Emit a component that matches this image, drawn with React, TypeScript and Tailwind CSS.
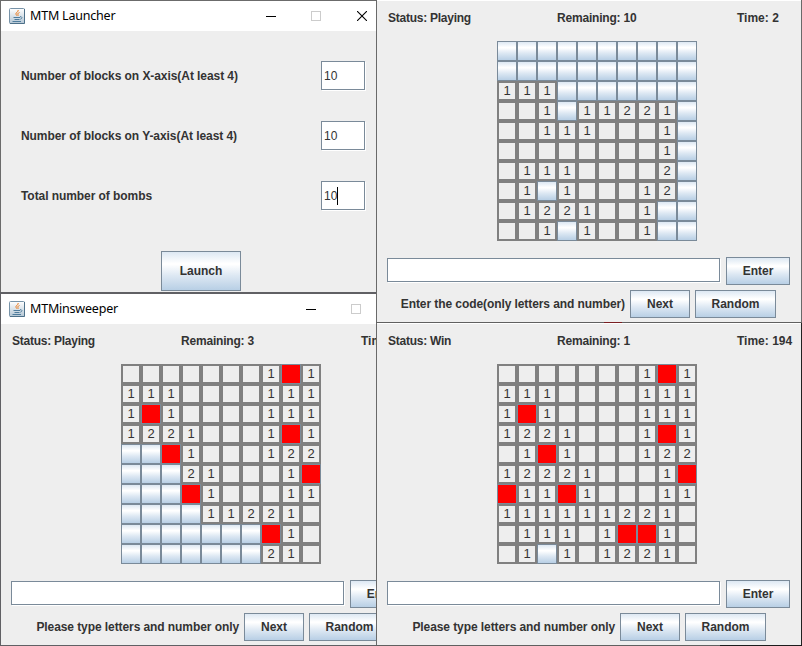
import type { ReactNode } from 'react';

const RAISED =
  'border border-[#7a8a99] bg-[linear-gradient(to_bottom,#dde8f3_0%,#ffffff_30%,#ffffff_33%,#dde8f3_62%,#b8cfe5_100%)]';

// '#' covered, '*' flagged, '.' empty, digits are neighbour counts
const BOARD_START = [
  '##########',
  '##########',
  '111#######',
  '..1#11221#',
  '..111...1#',
  '........1#',
  '.111....2#',
  '.1#1...12#',
  '.1221..1##',
  '..1#1..1##',
];

const BOARD_MIDDLE = [
  '.......1*1',
  '111....111',
  '1*1....111',
  '1221...1*1',
  '##*1...122',
  '###21...1*',
  '###*1...11',
  '####11221.',
  '#######*1.',
  '#######21.',
];

const BOARD_WON = [
  '.......1*1',
  '111....111',
  '1*1....111',
  '1221...1*1',
  '.1*1...122',
  '12221...1*',
  '*11*1...11',
  '111111221.',
  '.111.1**1.',
  '.1#1.1221.',
];

function Cell({ value }: { value: string }) {
  if (value === '#') return <div className={`size-5 ${RAISED}`} />;
  if (value === '*') return <div className="size-5 border border-[#7a8a99] bg-[#ff0000]" />;
  return (
    <div className="flex size-5 items-center justify-center border-2 border-[#808080] bg-[#eeeeee] pb-0.5 text-[13px] leading-none font-normal">
      {value === '.' ? '' : value}
    </div>
  );
}

function Board({ rows }: { rows: string[] }) {
  return (
    <div className="ml-[121px] grid w-[200px] grid-cols-10">
      {rows.flatMap((row, y) => row.split('').map((v, x) => <Cell key={`${y}-${x}`} value={v} />))}
    </div>
  );
}

function Button({ className, children }: { className: string; children: ReactNode }) {
  return (
    <button className={`flex shrink-0 items-center justify-center font-bold ${RAISED} ${className}`}>{children}</button>
  );
}

function Field({ className, children }: { className: string; children?: ReactNode }) {
  return (
    <div
      className={`flex shrink-0 items-center border border-[#7a8a99] bg-white font-normal shadow-[1px_1px_0_#ffffff] ${className}`}
    >
      {children}
    </div>
  );
}

function JavaIcon() {
  return (
    <svg width="16" height="16" viewBox="0 0 16 16" fill="none">
      <defs>
        <linearGradient id="tile" x1="0" y1="0" x2="0" y2="1">
          <stop offset="0" stopColor="#ffffff" />
          <stop offset="1" stopColor="#b4c6d4" />
        </linearGradient>
      </defs>
      <rect x="0.5" y="0.5" width="15" height="15" rx="1" fill="url(#tile)" stroke="#7793a8" />
      <path d="M15.5 1v14.5H1" stroke="#4d7089" />
      <path
        d="M9.200 2c.6 1.800-3 2.600-2.200 4.300.3.600.9 1 1 1.500M10.500 4.500c-2 .8-2 1.600-1.400 2.300.3.500 0 .8-.4 1.100"
        stroke="#ee7a1c"
      />
      <path d="M4.500 9.500h6.500M5.500 11.500h5M3.500 13.500h8.500" stroke="#4f7c9c" />
      <path d="M11 8.700c2.600-.4 2.300 2.100.3 2.500" stroke="#4f7c9c" />
    </svg>
  );
}

function TitleBar({ title, offset, children }: { title: string; offset: string; children: ReactNode }) {
  return (
    <div className="flex h-[30px] w-full shrink-0 items-center bg-white pl-2 text-black">
      <JavaIcon />
      <span className="ml-[5px] w-[120px] font-['Noto_Sans',sans-serif] text-[12.5px] leading-none font-normal tracking-[-0.2px] whitespace-nowrap">
        {title}
      </span>
      <div className={`flex items-center ${offset}`}>{children}</div>
    </div>
  );
}

function Minimize() {
  return <div className="h-px w-2.5 bg-black" />;
}

function Maximize() {
  return <div className="size-2.5 border border-[#cccccc]" />;
}

function LauncherRow({ label, value, caret }: { label: string; value: string; caret?: boolean }) {
  return (
    <div className="flex h-[29px] items-center pl-5">
      <span className="w-[300px] tracking-[-0.065px]">{label}</span>
      <Field className="h-[29px] w-11 pl-0.5">
        {value}
        {caret && <span className="h-[18px] w-px bg-black" />}
      </Field>
    </div>
  );
}

function Launcher() {
  return (
    <section className="flex h-[292px] w-full flex-col border-t border-l border-[#6b6b6b] bg-[#eeeeee]">
      <TitleBar title="MTM Launcher" offset="ml-[116px]">
        <Minimize />
        <div className="ml-[35px]">
          <Maximize />
        </div>
        <svg className="ml-9" width="10" height="10" viewBox="0 0 10 10" stroke="#000" strokeWidth="1.100">
          <path d="M0 0l10 10M10 0L0 10" />
        </svg>
      </TitleBar>
      <div className="mt-[30px] flex flex-col gap-[31px]">
        <LauncherRow label="Number of blocks on X-axis(At least 4)" value="10" />
        <LauncherRow label="Number of blocks on Y-axis(At least 4)" value="10" />
        <LauncherRow label="Total number of bombs" value="10" caret />
      </div>
      <Button className="mt-[41px] ml-40 h-10 w-20">Launch</Button>
    </section>
  );
}

interface GameProps {
  status: string;
  remaining: number;
  time: string;
  rows: string[];
  message: string;
  messageWidth: string;
}

function Game({ status, remaining, time, rows, message, messageWidth }: GameProps) {
  return (
    <div className="flex w-[424px] shrink-0 flex-col">
      <div className="flex h-[34px] items-center pt-0.5 pl-[11px]">
        <span className="w-[169px] shrink-0 tracking-[-0.25px]">Status: {status}</span>
        <span className="w-[180px] shrink-0 tracking-[-0.2px]">Remaining: {remaining}</span>
        <span className="shrink-0">Time: {time}</span>
      </div>
      <div className="mt-[7px] -ml-px">
        <Board rows={rows} />
      </div>
      <div className="mt-4 flex h-7 items-start pl-2.5">
        <Field className="mt-px h-6 w-[333px]" />
        <Button className="ml-1.5 h-7 w-16">Enter</Button>
      </div>
      <div className="mt-[5px] flex h-7 items-center gap-[5px]">
        <span className={`shrink-0 text-right tracking-[-0.08px] ${messageWidth}`}>{message}</span>
        <Button className="h-7 w-[60px]">Next</Button>
        <Button className="h-7 w-[81px]">Random</Button>
      </div>
    </div>
  );
}

export default function App() {
  return (
    <main className="grid h-[646px] w-[802px] grid-cols-[376px_426px] overflow-hidden bg-[#eeeeee] font-['Liberation_Sans',Arial,sans-serif] text-[12px] leading-none font-bold whitespace-nowrap text-[#333333]">
      <div className="flex h-[646px] flex-col overflow-hidden">
        <Launcher />
        <section className="flex h-[354px] flex-col overflow-hidden border-t-2 border-b border-l border-[#606064]">
          <TitleBar title="MTMinsweeper" offset="ml-[156px]">
            <Minimize />
            <div className="ml-[35px]">
              <Maximize />
            </div>
          </TitleBar>
          <div className="-mt-px flex overflow-hidden">
            <Game
              status="Playing"
              remaining={3}
              time=""
              rows={BOARD_MIDDLE}
              message="Please type letters and number only"
              messageWidth="w-[238px]"
            />
          </div>
        </section>
      </div>
      <div className="flex h-[646px] flex-col overflow-hidden">
        <section className="flex h-[322px] overflow-hidden border-r border-l border-[#696969] shadow-[inset_0_1px_0_#ffffff]">
          <Game
            status="Playing"
            remaining={10}
            time="2"
            rows={BOARD_START}
            message="Enter the code(only letters and number)"
            messageWidth="w-[248px]"
          />
        </section>
        <div className="flex h-px shrink-0 bg-[#606060]">
          <div className="ml-[228px] w-[18px] bg-[#7a1f22]" />
        </div>
        <section className="flex h-[322px] overflow-hidden border-r border-l border-r-[#222222] border-l-[#696969] shadow-[inset_0_1px_0_#ffffff]">
          <Game
            status="Win"
            remaining={1}
            time="194"
            rows={BOARD_WON}
            message="Please type letters and number only"
            messageWidth="w-[238px]"
          />
        </section>
        <div className="flex h-px shrink-0 justify-end bg-[#606060]">
          <div className="w-[82px] bg-[#1c1c1c]" />
        </div>
      </div>
    </main>
  );
}
